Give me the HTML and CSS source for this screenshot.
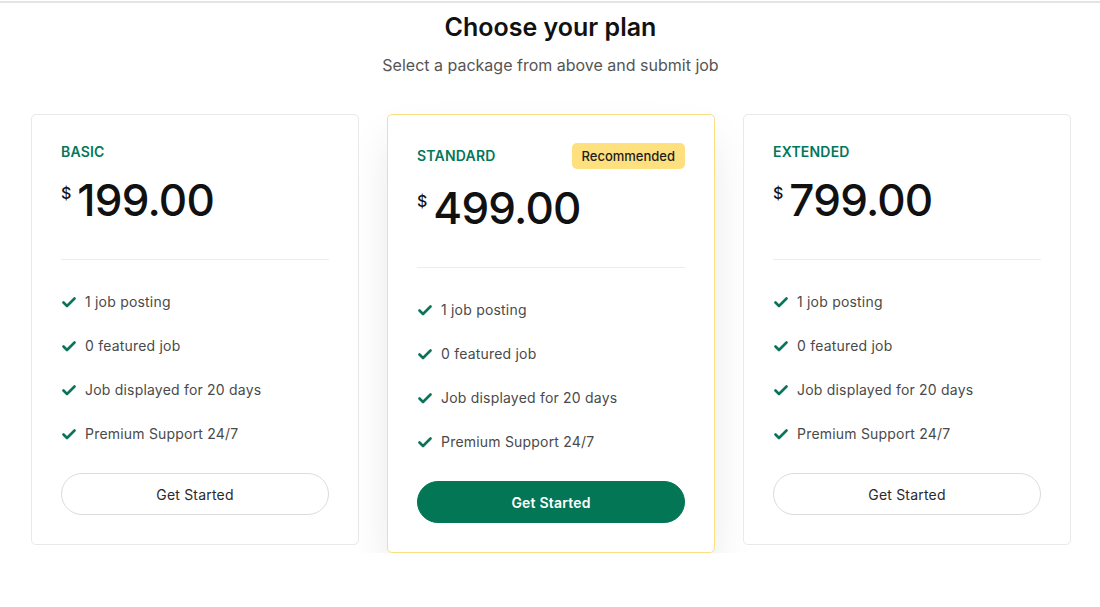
FILE: index.html
```html
<!DOCTYPE html>
<html lang="en">
<head>
<meta charset="utf-8">
<title>Choose your plan</title>
<link rel="stylesheet" href="styles.css">
</head>
<body>
<div class="topline"></div>
<section class="pricing">
  <header class="pricing-head">
    <h2 class="title">Choose your plan</h2>
    <p class="subtitle">Select a package from above and submit job</p>
  </header>
  <div class="plans">
    <article class="plan">
      <div class="plan-top">
        <div class="plan-name-row"><span class="plan-name">BASIC</span></div>
        <div class="price"><span class="currency">$</span><span class="amount">199.00</span></div>
      </div>
      <ul class="features">
        <li><svg class="check" viewBox="0 0 14 11"><path d="M1.5 5.5 L5 9 L12.5 1.5"/></svg>1 job posting</li>
        <li><svg class="check" viewBox="0 0 14 11"><path d="M1.5 5.5 L5 9 L12.5 1.5"/></svg>0 featured job</li>
        <li><svg class="check" viewBox="0 0 14 11"><path d="M1.5 5.5 L5 9 L12.5 1.5"/></svg>Job displayed for 20 days</li>
        <li><svg class="check" viewBox="0 0 14 11"><path d="M1.5 5.5 L5 9 L12.5 1.5"/></svg>Premium Support 24/7</li>
      </ul>
      <button class="btn">Get Started</button>
    </article>
    <article class="plan plan-featured">
      <div class="plan-top">
        <div class="plan-name-row"><span class="plan-name">STANDARD</span><span class="badge">Recommended</span></div>
        <div class="price"><span class="currency">$</span><span class="amount">499.00</span></div>
      </div>
      <ul class="features">
        <li><svg class="check" viewBox="0 0 14 11"><path d="M1.5 5.5 L5 9 L12.5 1.5"/></svg>1 job posting</li>
        <li><svg class="check" viewBox="0 0 14 11"><path d="M1.5 5.5 L5 9 L12.5 1.5"/></svg>0 featured job</li>
        <li><svg class="check" viewBox="0 0 14 11"><path d="M1.5 5.5 L5 9 L12.5 1.5"/></svg>Job displayed for 20 days</li>
        <li><svg class="check" viewBox="0 0 14 11"><path d="M1.5 5.5 L5 9 L12.5 1.5"/></svg>Premium Support 24/7</li>
      </ul>
      <button class="btn btn-primary">Get Started</button>
    </article>
    <article class="plan">
      <div class="plan-top">
        <div class="plan-name-row"><span class="plan-name">EXTENDED</span></div>
        <div class="price"><span class="currency">$</span><span class="amount">799.00</span></div>
      </div>
      <ul class="features">
        <li><svg class="check" viewBox="0 0 14 11"><path d="M1.5 5.5 L5 9 L12.5 1.5"/></svg>1 job posting</li>
        <li><svg class="check" viewBox="0 0 14 11"><path d="M1.5 5.5 L5 9 L12.5 1.5"/></svg>0 featured job</li>
        <li><svg class="check" viewBox="0 0 14 11"><path d="M1.5 5.5 L5 9 L12.5 1.5"/></svg>Job displayed for 20 days</li>
        <li><svg class="check" viewBox="0 0 14 11"><path d="M1.5 5.5 L5 9 L12.5 1.5"/></svg>Premium Support 24/7</li>
      </ul>
      <button class="btn">Get Started</button>
    </article>
  </div>
</section>
</body>
</html>
```

FILE: styles.css
```css
* { box-sizing: border-box; }
html, body { margin: 0; padding: 0; background: #fff; }
body {
  font-family: Inter, "Noto Sans", "Liberation Sans", sans-serif;
  color: #1a1a1a;
}
.topline {
  height: 3px;
  border-top: 1px solid #fff;
  border-bottom: 2px solid #e4e4e4;
}
.pricing {
  width: 1040px;
  margin: 0 auto;
  padding-left: 1px;
}
.pricing-head {
  text-align: center;
  padding-top: 8px;
}
.title {
  margin: 0;
  font-size: 25px;
  line-height: 32px;
  font-weight: 600;
  color: #111;
}
.subtitle {
  margin: 11px 0 0;
  font-size: 16px;
  line-height: 22px;
  color: #555;
}
.plans {
  display: flex;
  align-items: flex-start;
  gap: 28px;
  margin-top: 38px;
}
.plan {
  flex: 0 0 328px;
  border: 1px solid #e9e9e9;
  border-radius: 5px;
  padding: 28px 29px 29px;
  background: #fff;
}
.plan-featured {
  border-color: #fcdf84;
  box-shadow: 0 22px 44px -4px rgba(0, 0, 0, 0.1);
}
.plan-top {
  padding-bottom: 32px;
  border-bottom: 1px solid #ececec;
}
.plan-name-row {
  display: flex;
  align-items: center;
  justify-content: space-between;
  min-height: 18px;
}
.plan-name {
  font-size: 14px;
  line-height: 18px;
  font-weight: 600;
  letter-spacing: 0.2px;
  color: #03775a;
}
.badge {
  background: #fee07e;
  border-radius: 5px;
  padding: 0 10px;
  height: 26px;
  line-height: 26px;
  font-size: 13px;
  font-weight: 500;
  color: #1d1d1d;
}
.price {
  display: flex;
  align-items: flex-start;
  margin-top: 12px;
  height: 54px;
}
.currency {
  font-size: 16px;
  line-height: 16px;
  font-weight: 500;
  margin-top: 12px;
  margin-right: 6px;
  color: #111;
}
.amount {
  font-size: 44px;
  line-height: 54px;
  font-weight: 500;
  color: #111;
  letter-spacing: -0.8px;
}
.features {
  list-style: none;
  margin: 0;
  padding: 32px 0 0;
  display: flex;
  flex-direction: column;
  gap: 24px;
}
.features li {
  display: flex;
  align-items: center;
  height: 20px;
  font-size: 14px;
  line-height: 20px;
  letter-spacing: 0.2px;
  color: #4a4a4a;
}
.check {
  width: 14px;
  height: 11px;
  margin-left: 1px;
  margin-right: 9px;
  fill: none;
  stroke: #0b7458;
  stroke-width: 2.6;
  stroke-linecap: round;
  stroke-linejoin: round;
}
.btn {
  display: block;
  width: 100%;
  height: 42px;
  margin-top: 29px;
  border: 1px solid #dcdcdc;
  border-radius: 21px;
  background: #fff;
  font-family: inherit;
  font-size: 14px;
  font-weight: 400;
  letter-spacing: 0.2px;
  color: #2a2a2a;
}
.btn-primary {
  background: #037656;
  border-color: #037656;
  color: #fff;
  font-weight: 600;
}
```
